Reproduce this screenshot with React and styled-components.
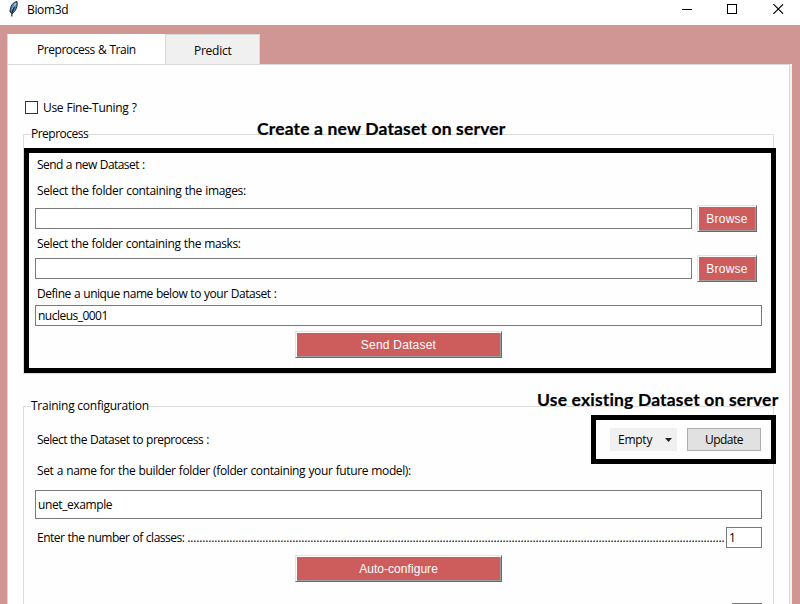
import React from "react";
import styled, { createGlobalStyle } from "styled-components";

const GlobalStyle = createGlobalStyle`
  * { box-sizing: border-box; }
  html, body { margin: 0; padding: 0; overflow: hidden; }
  body {
    font: 12px/16px "Open Sans", sans-serif;
    color: #000;
  }
`;

const Window = styled.div`
  width: 800px;
  height: 604px;
  overflow: hidden;
  background: #d09694;
  display: flex;
  flex-direction: column;
`;

const TitleBar = styled.header`
  height: 25px;
  flex: none;
  background: #fff;
  display: flex;
  padding: 0 16px 0 8px;
  justify-content: space-between;
`;

const TitleGroup = styled.div`
  display: flex;
  gap: 7px;
  padding-top: 1px;
`;

const WindowControls = styled.div`
  display: flex;
  gap: 35px;
  padding-top: 4px;
`;

const Text = styled.span`
  display: block;
  height: 16px;
  white-space: pre;
  word-spacing: 0.5px;
  letter-spacing: ${(p) => p.$spacing || 0}px;
`;

const TitleText = styled(Text)`
  margin-top: 1px;
`;

const Notebook = styled.main`
  margin: 9px 8px 0 7px;
  flex: 1;
  min-height: 0;
  display: flex;
  flex-direction: column;
`;

const TabList = styled.nav`
  display: flex;
  height: 30px;
  flex: none;
`;

const Tab = styled.div`
  width: ${(p) => p.$width}px;
  height: ${(p) => (p.$active ? 31 : 30)}px;
  padding: ${(p) => (p.$active ? "8px 0 0 29px" : "8px 0 0 28px")};
  background: ${(p) => (p.$active ? "#fff" : "#f0f0f0")};
  border: solid #d9d9d9;
  border-width: ${(p) => (p.$active ? "0 0 0 1px" : "1px 1px 0 1px")};
`;

const Pane = styled.div`
  flex: 1;
  min-height: 0;
  background: #fefefe;
  border: solid #d9d9d9;
  border-width: 1px 1px 0 1px;
  box-shadow: 2px 0 0 #f0f0f0;
  width: 783px;
  padding: 36px 15px 0 15px;
`;

const CheckRow = styled.label`
  display: flex;
  gap: 5px;
  height: 13px;
  margin-left: 2px;
`;

const CheckBox = styled.span`
  width: 13px;
  height: 13px;
  border: 1px solid #333;
  background: #fff;
`;

const CheckText = styled(Text)`
  margin-top: -1px;
`;

const Group = styled.section`
  position: relative;
  width: 751px;
  height: ${(p) => p.$height}px;
  margin-top: ${(p) => p.$top}px;
  border: 1px solid #dcdcdc;
  padding: 0 11px;
  display: flex;
  flex-direction: column;
`;

const Legend = styled.h2`
  position: absolute;
  top: -9px;
  left: 7px;
  height: 16px;
  margin: 0;
  font: inherit;
  white-space: nowrap;
  background: #fefefe;
  letter-spacing: ${(p) => p.$spacing}px;
`;

const FieldLabel = styled(Text)`
  flex: none;
  margin: ${(p) => p.$top || 0}px 0 0 2px;
`;

const FieldRow = styled.div`
  display: flex;
  flex: none;
  align-items: center;
  justify-content: space-between;
  margin-top: ${(p) => p.$top || 0}px;
`;

const Entry = styled.div`
  flex: none;
  width: ${(p) => p.$width}px;
  height: ${(p) => p.$height || 21}px;
  margin-top: ${(p) => p.$top || 0}px;
  border: 1px solid #7a7a7a;
  background: #fff;
  display: flex;
  align-items: center;
  padding-left: 2px;
`;

const TallEntry = styled(Entry)`
  padding-top: 1px;
`;

const RaisedButton = styled.button`
  flex: none;
  width: ${(p) => p.$width}px;
  height: 27px;
  margin: ${(p) => p.$top || 0}px 0 0;
  align-self: center;
  padding: 2px 0 0;
  border: solid;
  border-width: 1px;
  border-color: #e3e3e3 #696969 #696969 #e3e3e3;
  box-shadow: inset 1px 1px 0 #fff, inset -1px -1px 0 #a0a0a0;
  background: #cd5c5c;
  color: #fff;
  font: 12px/15px "Liberation Sans", Arial, sans-serif;
  letter-spacing: ${(p) => p.$spacing || 0}px;
`;

const CenteredButton = styled(RaisedButton)`
  align-self: flex-start;
  margin-left: 260px;
`;

const BrowseWrap = styled.div`
  display: flex;
  margin-right: 5px;
`;

const DatasetActions = styled.div`
  display: flex;
  gap: 10px;
  margin-right: 1px;
`;

const Dropdown = styled.div`
  width: 67px;
  height: 23px;
  background: #f0f0f0;
  display: flex;
  align-items: center;
  justify-content: space-between;
  padding: 1px 5px 0 8px;
`;

const PlainButton = styled.button`
  width: 74px;
  height: 23px;
  padding: 1px 0 0;
  border: 1px solid #adadad;
  background: #e1e1e1;
  color: #000;
  font: inherit;
  letter-spacing: -0.5px;
`;

const ClassesLabel = styled.div`
  display: flex;
  gap: 3px;
  margin-left: 2px;
  width: 689px;
  overflow: hidden;
`;

const NextEntry = styled(Entry)`
  width: 30px;
  margin: 21px 0 0 697px;
`;

const Callout = styled.div`
  position: absolute;
  left: ${(p) => p.$left}px;
  top: ${(p) => p.$top}px;
  width: ${(p) => p.$width}px;
  height: ${(p) => p.$height}px;
  border: 5px solid #000;
  pointer-events: none;
`;

const CalloutTitle = styled.strong`
  position: absolute;
  left: ${(p) => p.$left}px;
  top: ${(p) => p.$top}px;
  font: bold 17.5px/22px Lato, sans-serif;
  -webkit-text-stroke: 0.2px #000;
  letter-spacing: ${(p) => p.$spacing}px;
  white-space: nowrap;
`;

const Feather = () => (
  <svg width="12" height="17" viewBox="0 0 12 17">
    <path d="M9 .5C5.500 1 2 4.500 2 11L4.500 12.500C7.500 10 10 5.500 9 .5Z" fill="#4a86cc" stroke="#1c2733" strokeWidth="1" />
    <path d="M7.800 2L4.500 8.500" stroke="#a9c9e8" strokeWidth="1.300" />
    <path d="M6.500 5.500L4 11.500L3.800 15.500" fill="none" stroke="#111" strokeWidth="1.100" />
  </svg>
);

const MinimizeIcon = () => (
  <svg width="10" height="11" shapeRendering="crispEdges">
    <path d="M0 5.500H10" stroke="#000" />
  </svg>
);

const MaximizeIcon = () => (
  <svg width="11" height="10" shapeRendering="crispEdges">
    <rect x=".5" y=".5" width="9" height="9" fill="none" stroke="#000" />
  </svg>
);

const CloseIcon = () => (
  <svg width="11" height="10">
    <path d="M.3 0L10 9.700M10 .3L.3 10" stroke="#000" strokeWidth="1.100" />
  </svg>
);

const Arrow = () => (
  <svg width="7" height="4" viewBox="0 0 7 4">
    <path d="M0 0H7L3.500 4Z" fill="#222" />
  </svg>
);

function BrowseButton() {
  return (
    <BrowseWrap>
      <RaisedButton $width={60} $spacing={0.25}>Browse</RaisedButton>
    </BrowseWrap>
  );
}

export default function App() {
  return (
    <Window>
      <GlobalStyle />
      <TitleBar>
        <TitleGroup>
          <Feather />
          <TitleText $spacing={-0.35}>Biom3d</TitleText>
        </TitleGroup>
        <WindowControls>
          <MinimizeIcon />
          <MaximizeIcon />
          <CloseIcon />
        </WindowControls>
      </TitleBar>

      <Notebook>
        <TabList>
          <Tab $active $width={158}>
            <Text $spacing={-0.45}>Preprocess &amp; Train</Text>
          </Tab>
          <Tab $width={95}>
            <Text $spacing={-0.25}>Predict</Text>
          </Tab>
        </TabList>

        <Pane>
          <CheckRow>
            <CheckBox />
            <CheckText $spacing={-0.32}>Use Fine-Tuning ?</CheckText>
          </CheckRow>

          <Group $top={20} $height={240}>
            <Legend $spacing={-0.5}>Preprocess</Legend>
            <FieldLabel $top={22} $spacing={-0.56}>Send a new Dataset :</FieldLabel>
            <FieldLabel $top={10} $spacing={-0.35}>Select the folder containing the images:</FieldLabel>
            <FieldRow $top={6}>
              <Entry $width={657} />
              <BrowseButton />
            </FieldRow>
            <FieldLabel $top={4} $spacing={-0.38}>Select the folder containing the masks:</FieldLabel>
            <FieldRow $top={3}>
              <Entry $width={657} />
              <BrowseButton />
            </FieldRow>
            <FieldLabel $top={4} $spacing={-0.47}>Define a unique name below to your Dataset :</FieldLabel>
            <Entry $width={727} $top={3}>
              <Text $spacing={-0.52}>nucleus_0001</Text>
            </Entry>
            <CenteredButton $width={207} $top={5} $spacing={0.22}>Send Dataset</CenteredButton>
            <Callout $left={0} $top={13} $width={752} $height={225} />
            <CalloutTitle $left={233} $top={-17} $spacing={0.16}>Create a new Dataset on server</CalloutTitle>
          </Group>

          <Group $top={32} $height={260}>
            <Legend $spacing={-0.25}>Training configuration</Legend>
            <FieldRow $top={21}>
              <FieldLabel $spacing={-0.52}>Select the Dataset to preprocess :</FieldLabel>
              <DatasetActions>
                <Dropdown>
                  <Text $spacing={-0.25}>Empty</Text>
                  <Arrow />
                </Dropdown>
                <PlainButton>Update</PlainButton>
              </DatasetActions>
            </FieldRow>
            <FieldLabel $top={12} $spacing={-0.38}>
              Set a name for the builder folder (folder containing your future model):
            </FieldLabel>
            <TallEntry $width={727} $height={29} $top={11}>
              <Text $spacing={-0.4}>unet_example</Text>
            </TallEntry>
            <FieldRow $top={8}>
              <ClassesLabel>
                <Text $spacing={-0.5}>Enter the number of classes:</Text>
                <Text $spacing={-0.152}>{".".repeat(179)}</Text>
              </ClassesLabel>
              <Entry $width={36}>
                <Text>1</Text>
              </Entry>
            </FieldRow>
            <CenteredButton $width={207} $top={7} $spacing={0.05}>Auto-configure</CenteredButton>
            <NextEntry />
            <Callout $left={567} $top={8} $width={185} $height={49} />
            <CalloutTitle $left={513} $top={-18} $spacing={0.17}>Use existing Dataset on server</CalloutTitle>
          </Group>
        </Pane>
      </Notebook>
    </Window>
  );
}
